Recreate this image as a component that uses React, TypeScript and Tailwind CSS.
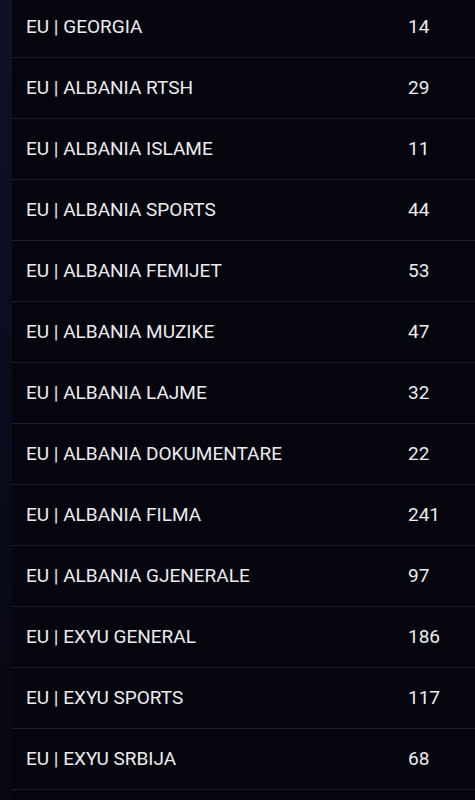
const categories = [
  { name: 'EU | GEORGIA', count: 14 },
  { name: 'EU | ALBANIA RTSH', count: 29 },
  { name: 'EU | ALBANIA ISLAME', count: 11 },
  { name: 'EU | ALBANIA SPORTS', count: 44 },
  { name: 'EU | ALBANIA FEMIJET', count: 53 },
  { name: 'EU | ALBANIA MUZIKE', count: 47 },
  { name: 'EU | ALBANIA LAJME', count: 32 },
  { name: 'EU | ALBANIA DOKUMENTARE', count: 22 },
  { name: 'EU | ALBANIA FILMA', count: 241 },
  { name: 'EU | ALBANIA GJENERALE', count: 97 },
  { name: 'EU | EXYU GENERAL', count: 186 },
  { name: 'EU | EXYU SPORTS', count: 117 },
  { name: 'EU | EXYU SRBIJA', count: 68 },
]

export default function App() {
  return (
    <div
      className="flex h-[800px] w-[475px] overflow-hidden bg-gradient-to-b from-[#0e1228] via-[#0a0c1e] to-[#07080f]"
      style={{ fontFamily: 'Roboto, "Liberation Sans", sans-serif' }}
    >
      <div className="ml-3 flex-1 bg-[#05050d]">
        <ul className="-mt-[3px]">
          {categories.map((c) => (
            <li
              key={c.name}
              className="flex h-[61px] items-center border-b border-[#1c1e2b] pl-[14px] text-[19px] text-[#ececf0]"
            >
              <span className="flex-1">{c.name}</span>
              <span className="w-[67px]">{c.count}</span>
            </li>
          ))}
        </ul>
      </div>
    </div>
  )
}
